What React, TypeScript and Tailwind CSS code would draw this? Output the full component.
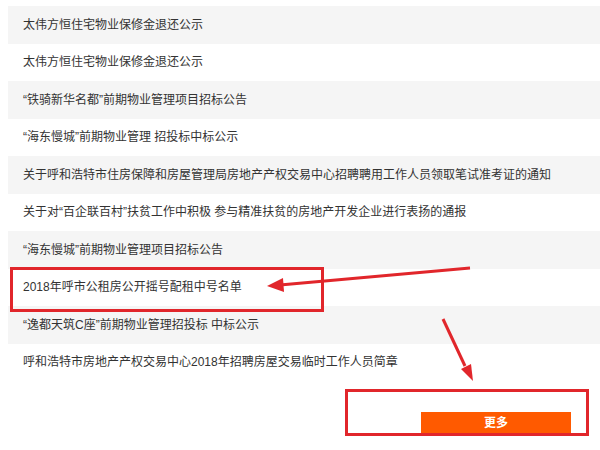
const notices = [
  "太伟方恒住宅物业保修金退还公示",
  "太伟方恒住宅物业保修金退还公示",
  "“铁骑新华名都”前期物业管理项目招标公告",
  "“海东慢城”前期物业管理 招投标中标公示",
  "关于呼和浩特市住房保障和房屋管理局房地产产权交易中心招聘聘用工作人员领取笔试准考证的通知",
  "关于对“百企联百村”扶贫工作中积极 参与精准扶贫的房地产开发企业进行表扬的通报",
  "“海东慢城”前期物业管理项目招标公告",
  "2018年呼市公租房公开摇号配租中号名单",
  "“逸都天筑C座”前期物业管理招投标 中标公示",
  "呼和浩特市房地产产权交易中心2018年招聘房屋交易临时工作人员简章",
];

export default function App() {
  return (
    <div
      className="relative h-[450px] w-[600px] overflow-hidden bg-white text-[12px] text-[#333]"
      style={{ fontFamily: '"Liberation Sans", "Noto Sans CJK SC", sans-serif' }}
    >
      <ul className="pl-2 pt-[6px]">
        {notices.map((title, i) => (
          <li
            key={i}
            className={`flex h-[37.5px] items-center pl-[15px] ${i % 2 === 0 ? "bg-[#f5f5f5]" : "bg-white"}`}
          >
            {title}
          </li>
        ))}
      </ul>

      <div className="flex justify-end pr-[29px] pt-[31px]">
        <button
          type="button"
          className="flex h-[22px] w-[150px] items-center justify-center bg-[#ff5a00] text-[12px] font-bold text-white"
        >
          更多
        </button>
      </div>

      {/* annotations */}
      <div className="absolute left-[10px] top-[267px] h-[45px] w-[314px] border-[3px] border-[#e1262b]" />
      <div className="absolute left-[345px] top-[389px] h-[47px] w-[244px] border-[3px] border-[#e1262b]" />
      <svg className="pointer-events-none absolute left-0 top-0" width="600" height="450">
        <line x1="470" y1="268" x2="280" y2="285" stroke="#e1262b" strokeWidth="3" />
        <polygon points="267,286 283,278 284,292" fill="#e1262b" />
        <line x1="443" y1="319" x2="465" y2="366" stroke="#e1262b" strokeWidth="3" />
        <polygon points="473,381 461,369 471,364" fill="#e1262b" />
      </svg>
    </div>
  );
}
